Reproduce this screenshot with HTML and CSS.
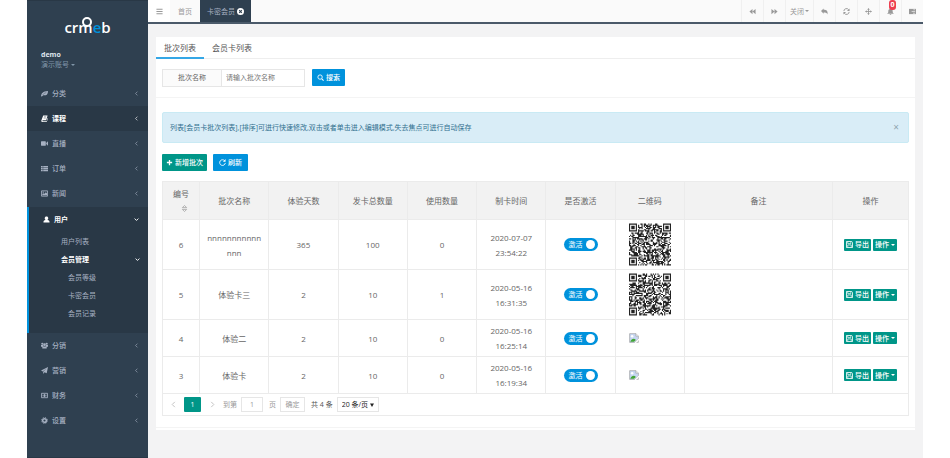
FILE: index.html
```html
<!DOCTYPE html>
<html lang="zh-CN">
<head>
<meta charset="utf-8">
<title>卡密会员</title>
<link rel="stylesheet" href="styles.css">
</head>
<body>
<svg class="sprite" aria-hidden="true">
  <symbol id="leaf" viewBox="0 0 16 16"><path d="M0 14C1 7 4 3 16 2c0 8-4 11-11 10l-3 3z" fill="currentColor"/><path d="M4 11c2-3 5-4 8-5" stroke="#2f4050" fill="none"/></symbol>
  <symbol id="book" viewBox="0 0 16 16"><path d="M5 1h10l-3 11H4c-1 0-1 2 0 2h9l2-7 1 1-3 8H3c-2 0-3-2-2-4z" fill="currentColor"/><path d="M7 4h5M6 7h5" stroke="#293846"/></symbol>
  <symbol id="video" viewBox="0 0 16 16"><path d="M1 3h9a1 1 0 0 1 1 1v8a1 1 0 0 1-1 1H1a1 1 0 0 1-1-1V4a1 1 0 0 1 1-1zM12 7l4-4v10l-4-4z" fill="currentColor"/></symbol>
  <symbol id="list" viewBox="0 0 16 16"><path d="M0 2h4v3H0zM5 2h11v3H5zM0 6h4v3H0zM5 6h11v3H5zM0 10h4v4H0zM5 10h11v4H5z" fill="currentColor"/></symbol>
  <symbol id="image" viewBox="0 0 16 16"><path d="M1 2h14v12H1z" fill="none" stroke="currentColor" stroke-width="2"/><path d="M3 12V9l2-2 2 2 4-4 3 3v4z" fill="currentColor"/><circle cx="5" cy="5" r="1.5" fill="currentColor"/></symbol>
  <symbol id="user" viewBox="0 0 16 16"><path d="M8 1c5 0 5 6 2 8 4 0 5 2 5 6H1c0-4 1-6 5-6C3 7 3 1 8 1z" fill="currentColor"/></symbol>
  <symbol id="group" viewBox="0 0 16 16"><circle cx="3" cy="4" r="2.5" fill="currentColor"/><circle cx="13" cy="4" r="2.5" fill="currentColor"/><circle cx="8" cy="6" r="3" fill="currentColor"/><path d="M0 7h5v4H0zM11 7h5v4h-5zM3 10h10v5H3z" fill="currentColor"/></symbol>
  <symbol id="plane" viewBox="0 0 16 16"><path d="M16 0l-3 14-5-2-3 4v-5L13 3 4 10 0 8z" fill="currentColor"/></symbol>
  <symbol id="money" viewBox="0 0 16 16"><path d="M1 3h14v10H1z" fill="none" stroke="currentColor" stroke-width="2"/><ellipse cx="8" cy="8" rx="2.5" ry="3.5" fill="currentColor"/><path d="M3 6v4M13 6v4" stroke="currentColor"/></symbol>
  <symbol id="gear" viewBox="0 0 16 16"><circle cx="8" cy="8" r="4.2" fill="none" stroke="currentColor" stroke-width="3.4"/><circle cx="8" cy="8" r="6.8" fill="none" stroke="currentColor" stroke-width="2" stroke-dasharray="2.7 2.64"/></symbol>
  <symbol id="bars" viewBox="0 0 16 16"><path d="M1 3h14M1 8h14M1 13h14" stroke="currentColor" stroke-width="2.4"/></symbol>
  <symbol id="close-circle" viewBox="0 0 16 16"><circle cx="8" cy="8" r="8" fill="currentColor"/><path d="M5 5l6 6M11 5l-6 6" stroke="#2f4050" stroke-width="2.6"/></symbol>
  <symbol id="back" viewBox="0 0 16 16"><path d="M8 2v12L1 8zM15 2v12L8 8z" fill="currentColor"/></symbol>
  <symbol id="forward" viewBox="0 0 16 16"><path d="M1 2v12l7-6zM8 2v12l7-6z" fill="currentColor"/></symbol>
  <symbol id="reply" viewBox="0 0 16 16"><path d="M6 1v3c7 0 10 3 9 11-1-4-4-5-9-5v3L0 7z" fill="currentColor"/></symbol>
  <symbol id="refresh" viewBox="0 0 16 16"><path d="M2 7a6 6 0 0 1 11-3M14 9a6 6 0 0 1-11 3" fill="none" stroke="currentColor" stroke-width="2.2"/><path d="M15 1v6H9zM1 15V9h6z" fill="currentColor"/></symbol>
  <symbol id="move" viewBox="0 0 16 16"><path d="M8 2v12M2 8h12" stroke="currentColor" stroke-width="2"/><path d="M8 0l3 4H5zM8 16l3-4H5zM0 8l4-3v6zM16 8l-4-3v6z" fill="currentColor"/></symbol>
  <symbol id="bell" viewBox="0 0 16 16"><path d="M7 0h2v2c4 0 4 4 4 6 0 3 1 4 3 5H0c2-1 3-2 3-5 0-2 0-6 4-6zM6 14h4c0 3-4 3-4 0z" fill="currentColor"/></symbol>
  <symbol id="tasks" viewBox="0 0 16 16"><path d="M0 2h16v12H0z" fill="currentColor"/><path d="M10 4h4M6 8h8M9 12h5" stroke="#fafafa" stroke-width="1.4"/></symbol>
  <symbol id="search" viewBox="0 0 16 16"><circle cx="7" cy="7" r="5" fill="none" stroke="currentColor" stroke-width="2"/><path d="M11 11l4 4" stroke="currentColor" stroke-width="2.4"/></symbol>
  <symbol id="plus" viewBox="0 0 16 16"><path d="M8 2v12M2 8h12" stroke="currentColor" stroke-width="3"/></symbol>
  <symbol id="reload" viewBox="0 0 16 16"><path d="M13 4a6.5 6.5 0 1 0 1.500 5" fill="none" stroke="currentColor" stroke-width="2"/><path d="M15 0v6H9z" fill="currentColor"/></symbol>
  <symbol id="save" viewBox="0 0 16 16"><path d="M1 1h12l2 2v12H1z" fill="none" stroke="currentColor" stroke-width="2"/><path d="M4 2v4h7V2M4 14V9h8v5" fill="none" stroke="currentColor" stroke-width="1.6"/></symbol>
  <symbol id="left" viewBox="0 0 16 16"><path d="M11 2L5 8l6 6" fill="none" stroke="currentColor" stroke-width="2"/></symbol>
  <symbol id="right" viewBox="0 0 16 16"><path d="M5 2l6 6-6 6" fill="none" stroke="currentColor" stroke-width="2"/></symbol>
  <symbol id="down" viewBox="0 0 16 16"><path d="M2 5l6 6 6-6" fill="none" stroke="currentColor" stroke-width="3"/></symbol>
  <symbol id="caret" viewBox="0 0 16 16"><path d="M0 4h16l-8 8z" fill="currentColor"/></symbol>
  <symbol id="triangle" viewBox="0 0 16 16"><path d="M0 2h16L8 16z" fill="currentColor"/></symbol>
  <symbol id="sort" viewBox="0 0 16 16"><path d="M8 1l5 5H3zM8 15l5-5H3z" fill="none" stroke="currentColor" stroke-width="2"/></symbol>
  <symbol id="broken" viewBox="0 0 16 16"><path d="M1 1h10l4 4v4l-6 6H1z" fill="#c6d6f2" stroke="#999"/><path d="M11 1v4h4" fill="#fff" stroke="#999"/><circle cx="5" cy="5" r="2" fill="#fff"/><path d="M2 14c2-5 6-6 9-3l-3 3z" fill="#43a536"/><path d="M9 15l6-6v6z" fill="#fff"/><path d="M12 15h3v-3" fill="none" stroke="#999"/></symbol>
</svg>

<div class="app">
  <aside class="sidebar">
    <div class="profile">
      <div class="logo">cr<span class="logo-m">m</span><span class="logo-e">e</span>b</div>
      <strong class="name">demo</strong>
      <a class="role" href="#">演示账号 <svg class="caret"><use href="#caret"/></svg></a>
    </div>
    <nav>
      <a class="item" href="#"><svg class="icon"><use href="#leaf"/></svg>分类<svg class="arrow"><use href="#left"/></svg></a>
      <a class="item hover" href="#"><svg class="icon"><use href="#book"/></svg>课程<svg class="arrow"><use href="#left"/></svg></a>
      <a class="item" href="#"><svg class="icon"><use href="#video"/></svg>直播<svg class="arrow"><use href="#left"/></svg></a>
      <a class="item" href="#"><svg class="icon"><use href="#list"/></svg>订单<svg class="arrow"><use href="#left"/></svg></a>
      <a class="item" href="#"><svg class="icon"><use href="#image"/></svg>新闻<svg class="arrow"><use href="#left"/></svg></a>
      <div class="group">
        <a class="item open" href="#"><svg class="icon"><use href="#user"/></svg>用户<svg class="arrow"><use href="#down"/></svg></a>
        <a class="sub" href="#">用户列表</a>
        <a class="sub open" href="#">会员管理<svg class="arrow"><use href="#down"/></svg></a>
        <a class="sub third" href="#">会员等级</a>
        <a class="sub third" href="#">卡密会员</a>
        <a class="sub third" href="#">会员记录</a>
      </div>
      <a class="item" href="#"><svg class="icon"><use href="#group"/></svg>分销<svg class="arrow"><use href="#left"/></svg></a>
      <a class="item" href="#"><svg class="icon"><use href="#plane"/></svg>营销<svg class="arrow"><use href="#left"/></svg></a>
      <a class="item" href="#"><svg class="icon"><use href="#money"/></svg>财务<svg class="arrow"><use href="#left"/></svg></a>
      <a class="item" href="#"><svg class="icon"><use href="#gear"/></svg>设置<svg class="arrow"><use href="#left"/></svg></a>
    </nav>
  </aside>

  <div class="main">
    <header class="topbar">
      <button class="tool menu" aria-label="菜单"><svg class="icon"><use href="#bars"/></svg></button>
      <a class="page-tab" href="#">首页</a>
      <a class="page-tab current" href="#">卡密会员<svg class="icon"><use href="#close-circle"/></svg></a>
      <div class="tools">
        <button class="tool" aria-label="向左"><svg class="icon"><use href="#back"/></svg></button>
        <button class="tool" aria-label="向右"><svg class="icon"><use href="#forward"/></svg></button>
        <button class="tool wide">关闭<svg class="caret"><use href="#caret"/></svg></button>
        <button class="tool" aria-label="返回"><svg class="icon"><use href="#reply"/></svg></button>
        <button class="tool" aria-label="刷新"><svg class="icon"><use href="#refresh"/></svg></button>
        <button class="tool" aria-label="全屏"><svg class="icon"><use href="#move"/></svg></button>
        <button class="tool" aria-label="通知"><svg class="icon"><use href="#bell"/></svg><span class="badge">0</span></button>
        <button class="tool" aria-label="任务"><svg class="icon"><use href="#tasks"/></svg></button>
      </div>
    </header>

    <main class="card">
      <div class="tabs"><a class="tab active" href="#">批次列表</a><a class="tab" href="#">会员卡列表</a></div>
      <form class="search">
        <div class="field"><label for="batch">批次名称</label><input id="batch" type="text" placeholder="请输入批次名称"></div>
        <button class="btn blue" type="button"><svg class="icon"><use href="#search"/></svg>搜索</button>
      </form>
      <section class="content">
        <div class="alert"><span>列表[会员卡批次列表],[排序]可进行快速修改,双击或者单击进入编辑模式,失去焦点可进行自动保存</span><button class="dismiss" aria-label="关闭提示">×</button></div>
        <div class="actions">
          <button class="btn green"><svg class="icon"><use href="#plus"/></svg>新增批次</button>
          <button class="btn blue"><svg class="icon"><use href="#reload"/></svg>刷新</button>
        </div>
        <table>
          <colgroup><col class="c-id"><col><col><col><col><col><col><col><col class="c-note"><col class="c-act"></colgroup>
          <thead><tr><th>编号<svg class="sort"><use href="#sort"/></svg></th><th>批次名称</th><th>体验天数</th><th>发卡总数量</th><th>使用数量</th><th>制卡时间</th><th>是否激活</th><th>二维码</th><th>备注</th><th>操作</th></tr></thead>
          <tbody>
            <tr><td>6</td><td>nnnnnnnnnnnnnn</td><td>365</td><td>100</td><td>0</td><td>2020-07-07 23:54:22</td><td><label class="switch">激活<input type="checkbox" checked></label></td><td><svg class="qr" data-seed="11"></svg></td><td></td><td><div class="ops"><button class="btn small green"><svg class="icon"><use href="#save"/></svg>导出</button><button class="btn small green">操作<svg class="caret"><use href="#caret"/></svg></button></div></td></tr>
            <tr><td>5</td><td>体验卡三</td><td>2</td><td>10</td><td>1</td><td>2020-05-16 16:31:35</td><td><label class="switch">激活<input type="checkbox" checked></label></td><td><svg class="qr" data-seed="47"></svg></td><td></td><td><div class="ops"><button class="btn small green"><svg class="icon"><use href="#save"/></svg>导出</button><button class="btn small green">操作<svg class="caret"><use href="#caret"/></svg></button></div></td></tr>
            <tr><td>4</td><td>体验二</td><td>2</td><td>10</td><td>0</td><td>2020-05-16 16:25:14</td><td><label class="switch">激活<input type="checkbox" checked></label></td><td class="missing"><svg class="broken"><use href="#broken"/></svg></td><td></td><td><div class="ops"><button class="btn small green"><svg class="icon"><use href="#save"/></svg>导出</button><button class="btn small green">操作<svg class="caret"><use href="#caret"/></svg></button></div></td></tr>
            <tr><td>3</td><td>体验卡</td><td>2</td><td>10</td><td>0</td><td>2020-05-16 16:19:34</td><td><label class="switch">激活<input type="checkbox" checked></label></td><td class="missing"><svg class="broken"><use href="#broken"/></svg></td><td></td><td><div class="ops"><button class="btn small green"><svg class="icon"><use href="#save"/></svg>导出</button><button class="btn small green">操作<svg class="caret"><use href="#caret"/></svg></button></div></td></tr>
          </tbody>
        </table>
        <div class="pager">
          <button class="step" aria-label="上一页"><svg class="icon"><use href="#left"/></svg></button>
          <button class="page">1</button>
          <button class="step" aria-label="下一页"><svg class="icon"><use href="#right"/></svg></button>
          <label for="goto">到第</label><input id="goto" type="text" value="1"><span>页</span>
          <button class="confirm">确定</button>
          <span class="total">共 4 条</span>
          <div class="size"><select aria-label="每页条数"><option>20 条/页</option></select><svg class="caret"><use href="#triangle"/></svg></div>
        </div>
      </section>
    </main>
  </div>
</div>
<script src="qr.js"></script>
</body>
</html>
```
FILE: styles.css
```css
* { box-sizing: border-box; }
body {
  margin: 0;
  background: #fff;
  color: #666;
  font: 7px/15px "Open Sans", "Noto Sans CJK SC", sans-serif;
}
a { color: inherit; text-decoration: none; }
button, input, select { font: inherit; color: inherit; margin: 0; padding: 0; border: 0; background: none; border-radius: 0; }
button { display: flex; align-items: center; justify-content: center; }
svg { flex: none; display: block; }
.sprite { position: absolute; width: 0; height: 0; }
.icon { width: 7px; height: 7px; }
.caret { width: 4px; height: 4px; }

.app { display: flex; min-height: 100vh; margin: 0 27px; background: #f3f3f4; }

/* sidebar */
.sidebar { width: 121px; flex: none; background: #2f4050; color: #a7b1c2; border-top: 1px solid #293846; border-bottom: 1px solid #293846; }
.profile { display: flex; flex-direction: column; height: 80px; padding: 14px 14px 0; line-height: 10px; }
.logo { align-self: center; color: #fff; font: 600 15px/24px "Open Sans", sans-serif; margin-bottom: 11px; }
.logo-m { position: relative; }
.logo-m::before { content: ""; position: absolute; left: 4px; top: 0; width: 6px; height: 6px; border: 2px solid #fff; border-radius: 50%; }
.logo-e { color: #0092dc; }
.name { color: #dfe4ed; }
.role { display: flex; align-items: center; gap: 2px; color: #8095a8; }
.item { display: flex; align-items: center; gap: 4px; height: 25px; padding: 0 9px 0 14px; font-weight: 500; }
.item.hover { background: #293846; color: #fff; font-weight: 700; }
.arrow { width: 5px; height: 5px; margin-left: auto; }
.group { margin-top: 1px; padding-bottom: 11px; background: #293846; border-left: 2px solid #0092dc; }
.item.open { color: #fff; font-weight: 700; }
.sub { display: flex; align-items: center; height: 18px; padding: 0 8px 0 32px; }
.sub.open { color: #fff; font-weight: 700; }
.sub.third { padding-left: 39px; }

/* top bar */
.main { flex: 1; min-width: 0; }
.topbar { display: flex; height: 24px; background: #fafafa; border-bottom: 2px solid #4a5969; color: #999; }
.tool { position: relative; width: 22px; border-left: 1px solid #f0f0f0; gap: 1px; }
.tool.menu { background: #fff; border: 0; }
.tool.wide { width: 28px; }
.tools { display: flex; margin-left: auto; }
.page-tab { display: flex; align-items: center; gap: 2px; padding: 0 8px; }
.page-tab.current { padding: 0 7px; background: #2f4050; color: #a7b1c2; }
.page-tab.current .icon { color: #fff; }
.badge { position: absolute; top: 0; right: 5px; width: 7px; height: 10px; border-radius: 3px; background: #ed3f50; color: #fff; font-weight: 700; line-height: 10px; text-align: center; }

/* card */
.card { margin: 13px 8px 0; background: #fff; padding-bottom: 2px; }
.tabs { display: flex; height: 22px; border-bottom: 1px solid #eee; color: #555; font-size: 8px; }
.tab { height: 22px; padding: 0 8px; line-height: 21px; }
.tab.active { border-bottom: 2px solid #35a7e6; }
.search { display: flex; align-items: center; gap: 7px; height: 39px; padding: 0 6px 1px; border-bottom: 1px solid #f4f4f4; }
.field { display: flex; height: 18px; border: 1px solid #e6e6e6; }
.field label { width: 59px; line-height: 16px; text-align: center; background: #fbfbfb; border-right: 1px solid #e6e6e6; }
.field input { width: 82px; padding: 0 4px; }
.field input::placeholder { color: #757575; opacity: 1; }
.btn { height: 17px; padding: 0 6px; gap: 2px; border-radius: 1px; color: #fff; font-weight: 500; }
.search .btn { padding: 0 5px; }
.blue { background: #0092dc; }
.green { background: #009688; }
.content { padding: 14px 6px 11px; border-bottom: 1px solid #f4f4f4; }
.alert { display: flex; align-items: center; justify-content: space-between; height: 31px; padding: 0 8px 0 7px; border: 1px solid #c9eaf4; border-radius: 2px; background: #d9edf7; color: #31708f; }
.dismiss { width: 8px; color: #8fa5b0; font-size: 10px; }
.actions { display: flex; gap: 6px; padding: 11px 0 10px; }
.actions .green { padding: 0 4px; }

/* table */
table { width: 100%; table-layout: fixed; border-collapse: collapse; font-size: 8px; }
th, td { padding: 3px 7px; border: 1px solid #ebebeb; font-weight: 400; text-align: center; overflow-wrap: anywhere; }
th { height: 38px; background: #f2f2f2; }
.c-id { width: 37px; }
.c-note { width: 148px; }
.c-act { width: 76px; }
th .sort { width: 7px; height: 7px; margin: 4px 0 4px 11px; color: #aaa; }
.switch { display: flex; align-items: center; justify-content: space-between; width: 34px; height: 13px; margin: auto; padding: 0 3px 0 5px; border-radius: 7px; background: #0092dc; color: #fff; font-size: 7px; }
.switch input { appearance: none; width: 9px; height: 9px; border-radius: 50%; background: #fff; }
.qr { width: 42px; height: 43px; margin: auto; }
td.missing { padding-left: 13px; }
.broken { width: 10px; height: 10px; }
.ops { display: flex; justify-content: center; gap: 2px; }
.small { height: 12px; padding: 0 2px; font-size: 7px; }

/* pager */
.pager { display: flex; align-items: center; gap: 6px; height: 22px; padding: 0 5px; border: 1px solid #ebebeb; border-top: 0; color: #999; }
.step { width: 10px; color: #bbb; }
.page { width: 17px; height: 15px; border-radius: 1px; background: #009688; color: #fff; }
.pager input { width: 22px; height: 15px; border: 1px solid #e6e6e6; text-align: center; margin-left: -2px; }
.confirm { width: 25px; height: 15px; border: 1px solid #e6e6e6; margin-left: -2px; }
.total { color: #555; }
.size { display: flex; align-items: center; width: 42px; height: 15px; margin-left: -2px; padding: 0 4px; border: 1px solid #e6e6e6; color: #222; }
.size select { appearance: none; flex: 1; min-width: 0; height: 13px; line-height: 13px; }
```
FILE: qr.js
```js
// Fills each .qr element with a module grid and three finder squares.
const SIZE = 37;
document.querySelectorAll('.qr').forEach(svg => {
  let seed = Number(svg.dataset.seed);
  const next = () => (seed = (seed * 16807) % 2147483647) / 2147483647;
  for (let i = 0; i < 20; i++) next();
  const finder = (x, y) => {
    const r = Math.max(Math.abs(x - 3), Math.abs(y - 3));
    return r === 4 ? 0 : r === 3 || r < 2 ? 1 : 0;
  };
  let d = '';
  for (let y = 0; y < SIZE; y++) {
    for (let x = 0; x < SIZE; x++) {
      let on = next() < 0.54;
      if (x < 8 && y < 8) on = finder(x, y);
      if (x > SIZE - 9 && y < 8) on = finder(SIZE - 1 - x, y);
      if (x < 8 && y > SIZE - 9) on = finder(x, SIZE - 1 - y);
      if (on) d += `M${x} ${y}h1v1h-1z`;
    }
  }
  svg.setAttribute('viewBox', `0 0 ${SIZE} ${SIZE}`);
  svg.innerHTML = `<path fill="#222" d="${d}"/>`;
});
```
